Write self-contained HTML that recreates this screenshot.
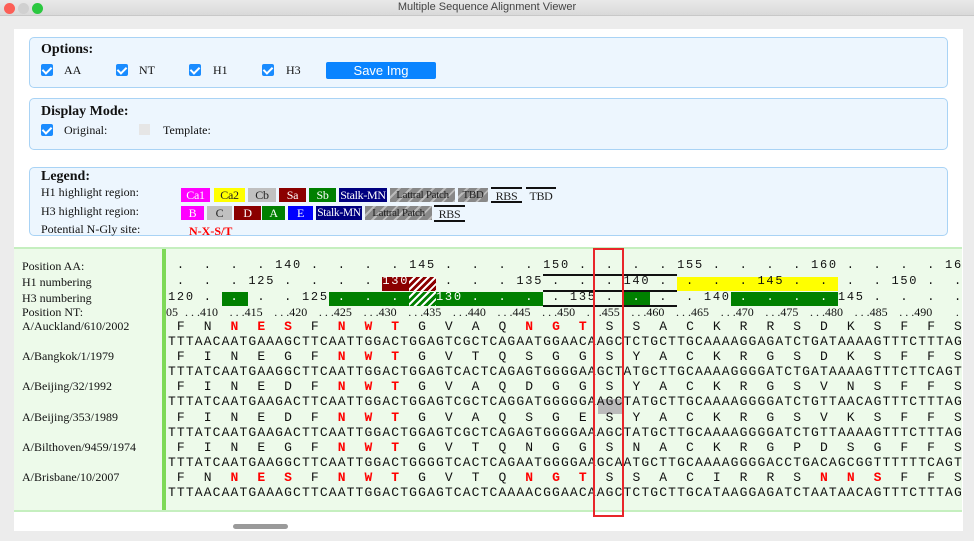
<!DOCTYPE html>
<html><head><meta charset="utf-8"><style>
*{margin:0;padding:0;box-sizing:border-box}
body{width:974px;height:541px;background:#ececec;position:relative;overflow:hidden;font-family:"Liberation Serif",serif;color:#111}
.a{position:absolute;white-space:pre}
.tb{position:absolute;left:0;top:0;width:974px;height:16px;background:linear-gradient(#e9e9e9,#d9d9d9);border-bottom:1px solid #c8c8c8}
.dot{position:absolute;top:3px;width:11px;height:11px;border-radius:50%}
.main{position:absolute;left:14px;top:29px;width:949px;height:502px;background:#fff}
.pn{position:absolute;left:29px;width:919px;background:#edf6fe;border:1px solid #a9d3f5;border-radius:5px}
.h{font-weight:bold;font-size:14px}
.lb{font-size:12px}
.cb{position:absolute;width:12px;height:12px;background:#1a8cff;border-radius:2px}
.cb:after{content:"";position:absolute;left:3px;top:1px;width:4px;height:7px;border:solid #fff;border-width:0 2px 2px 0;transform:rotate(45deg)}
.chip{position:absolute;height:14px;font-size:12px;line-height:14px;text-align:center;color:#fff;white-space:nowrap;overflow:hidden;letter-spacing:-0.3px}
.hat{background:repeating-linear-gradient(135deg,#888 0 6px,#bbb 6px 8px);color:#222;font-size:11px}
.seq{position:absolute;left:166px;top:248px;width:796px;height:263px;overflow:hidden}
.m{position:absolute;left:2px;font-family:"Liberation Mono",monospace;font-size:13px;letter-spacing:1.13px;line-height:15px;white-space:pre;color:#111}
.r{color:#f00;font-weight:bold}
.w{color:#fff}
.bx{position:absolute}
</style></head><body>
<div class="tb">
<div class="dot" style="left:4px;background:#fc5f57"></div>
<div class="dot" style="left:18px;background:#d0d0d0"></div>
<div class="dot" style="left:32px;background:#2bc840"></div>
<div class="a" style="left:0;width:974px;text-align:center;top:1px;font-family:'Liberation Sans',sans-serif;font-size:11px;color:#444">Multiple Sequence Alignment Viewer</div>
</div>
<div class="main"></div>

<div class="pn" style="top:37px;height:51px"></div>
<div class="a h" style="left:41px;top:42px">Options:</div>
<div class="cb" style="left:41px;top:64px"></div><div class="a lb" style="left:64px;top:63px">AA</div>
<div class="cb" style="left:116px;top:64px"></div><div class="a lb" style="left:139px;top:63px">NT</div>
<div class="cb" style="left:189px;top:64px"></div><div class="a lb" style="left:213px;top:63px">H1</div>
<div class="cb" style="left:262px;top:64px"></div><div class="a lb" style="left:286px;top:63px">H3</div>
<div class="a" style="left:326px;top:62px;width:110px;height:17px;background:#0a84ff;border-radius:2px;color:#fff;font-family:'Liberation Sans',sans-serif;font-size:13px;text-align:center;line-height:17px">Save Img</div>

<div class="pn" style="top:98px;height:52px"></div>
<div class="a h" style="left:41px;top:104px">Display Mode:</div>
<div class="cb" style="left:41px;top:124px"></div><div class="a lb" style="left:64px;top:123px">Original:</div>
<div class="a" style="left:139px;top:124px;width:11px;height:11px;background:#e6e6e6"></div><div class="a lb" style="left:163px;top:123px">Template:</div>

<div class="pn" style="top:167px;height:69px"></div>
<div class="a h" style="left:41px;top:169px">Legend:</div>
<div class="a lb" style="left:41px;top:185px">H1 highlight region:</div>
<div class="a lb" style="left:41px;top:204px">H3 highlight region:</div>
<div class="a lb" style="left:41px;top:222px">Potential N-Gly site:</div>
<div class="a r" style="left:189px;top:224px;font-size:12px">N-X-S/T</div>
<div class="chip" style="left:181px;top:188px;width:29px;background:#f0f">Ca1</div>
<div class="chip" style="left:214px;top:188px;width:31px;background:#ff0;color:#222">Ca2</div>
<div class="chip" style="left:248px;top:188px;width:28px;background:#c0c0c0;color:#222">Cb</div>
<div class="chip" style="left:279px;top:188px;width:27px;background:#8b0000">Sa</div>
<div class="chip" style="left:309px;top:188px;width:27px;background:#008000">Sb</div>
<div class="chip" style="left:339px;top:188px;width:48px;background:#000080">Stalk-MN</div>
<div class="chip hat" style="left:390px;top:188px;width:65px">Lattral Patch</div>
<div class="chip hat" style="left:458px;top:188px;width:30px">TBD</div>
<div class="chip" style="left:491px;top:187px;width:31px;color:#222;border-top:2px solid #111;border-bottom:2px solid #111;height:16px">RBS</div>
<div class="chip" style="left:526px;top:187px;width:30px;color:#222;border-top:2px solid #111">TBD</div>
<div class="chip" style="left:181px;top:206px;width:23px;background:#f0f">B</div>
<div class="chip" style="left:207px;top:206px;width:25px;background:#c0c0c0;color:#222">C</div>
<div class="chip" style="left:234px;top:206px;width:27px;background:#8b0000">D</div>
<div class="chip" style="left:262px;top:206px;width:23px;background:#008000">A</div>
<div class="chip" style="left:288px;top:206px;width:25px;background:#0000ff">E</div>
<div class="chip" style="left:316px;top:206px;width:46px;background:#000080;font-size:11.5px">Stalk-MN</div>
<div class="chip hat" style="left:365px;top:206px;width:67px">Lattral Patch</div>
<div class="chip" style="left:434px;top:205px;width:31px;color:#222;border-top:2px solid #111;border-bottom:2px solid #111;height:17px">RBS</div>

<div class="a" style="left:14px;top:247px;width:948px;height:265px;background:#edfaea;border-top:2px solid #c5efbf;border-bottom:2px solid #c5efbf"></div>
<div class="a" style="left:162px;top:249px;width:4px;height:261px;background:#7ed957"></div>
<div class="a lb" style="left:22px;top:259px">Position AA:</div>
<div class="a lb" style="left:22px;top:275px">H1 numbering</div>
<div class="a lb" style="left:22px;top:291px">H3 numbering</div>
<div class="a lb" style="left:22px;top:305px">Position NT:</div>
<div class="a lb" style="left:22px;top:319px">A/Auckland/610/2002</div>
<div class="a lb" style="left:22px;top:349px">A/Bangkok/1/1979</div>
<div class="a lb" style="left:22px;top:379px">A/Beijing/32/1992</div>
<div class="a lb" style="left:22px;top:410px">A/Beijing/353/1989</div>
<div class="a lb" style="left:22px;top:440px">A/Bilthoven/9459/1974</div>
<div class="a lb" style="left:22px;top:470px">A/Brisbane/10/2007</div>

<div class="seq">
<div class="bx" style="left:216.4px;top:29px;width:26.8px;height:14px;background:#8b0000"></div>
<div class="bx" style="left:243.2px;top:29px;width:26.8px;height:14px;background:repeating-linear-gradient(135deg,#8b0000 0 3px,#fff 3px 5px)"></div>
<div class="bx" style="left:511px;top:29px;width:161px;height:14px;background:#ff0"></div>
<div class="bx" style="left:55.6px;top:44px;width:26.8px;height:14px;background:#008000"></div>
<div class="bx" style="left:162.8px;top:44px;width:214.4px;height:14px;background:#008000"></div>
<div class="bx" style="left:243.2px;top:44px;width:26.8px;height:14px;background:repeating-linear-gradient(135deg,#008000 0 3px,#fff 3px 5px)"></div>
<div class="bx" style="left:457.6px;top:44px;width:26.8px;height:14px;background:#008000"></div>
<div class="bx" style="left:564.8px;top:44px;width:107.2px;height:14px;background:#008000"></div>
<div class="bx" style="left:377.2px;top:26px;width:134px;height:2px;background:#111"></div>
<div class="bx" style="left:377.2px;top:42px;width:134px;height:2px;background:#111"></div>
<div class="bx" style="left:377.2px;top:57px;width:134px;height:2px;background:#111"></div>
<div class="bx" style="left:431.6px;top:151px;width:26.8px;height:15px;background:#bbb"></div>
<div class="m" style="top:10px;font-size:12px;letter-spacing:1.73px"> .  .  .  . 140 .  .  .  . 145 .  .  .  . 150 .  .  .  . 155 .  .  .  . 160 .  .  .  . 16 </div>
<div class="m" style="top:26px;font-size:12px;letter-spacing:1.73px"> .  .  . 125 .  .  .  . <span class="w">130</span>    .  .  . 135 .  .  . 140 .  .  .  . 145 .  .  .  . 150 .  . </div>
<div class="m" style="top:42px;font-size:12px;letter-spacing:1.73px">120 . <span class="w"> . </span> .  . 125<span class="w"> .  .  .    130 .  .  . </span> . 135 . <span class="w"> . </span> .  . 140<span class="w"> .  .  .  . </span>145 .  .  .  . </div>
<div class="a" style="left:0;top:57px;font-size:12px;line-height:15px">05</div>
<div class="a" style="left:6px;top:57px;font-size:12px;line-height:15px"><span style="display:inline-block;width:46px;text-align:right">. . .410</span><span style="display:inline-block;width:44.65px;text-align:right">. . .415</span><span style="display:inline-block;width:44.65px;text-align:right">. . .420</span><span style="display:inline-block;width:44.65px;text-align:right">. . .425</span><span style="display:inline-block;width:44.65px;text-align:right">. . .430</span><span style="display:inline-block;width:44.65px;text-align:right">. . .435</span><span style="display:inline-block;width:44.65px;text-align:right">. . .440</span><span style="display:inline-block;width:44.65px;text-align:right">. . .445</span><span style="display:inline-block;width:44.65px;text-align:right">. . .450</span><span style="display:inline-block;width:44.65px;text-align:right">. . .455</span><span style="display:inline-block;width:44.65px;text-align:right">. . .460</span><span style="display:inline-block;width:44.65px;text-align:right">. . .465</span><span style="display:inline-block;width:44.65px;text-align:right">. . .470</span><span style="display:inline-block;width:44.65px;text-align:right">. . .475</span><span style="display:inline-block;width:44.65px;text-align:right">. . .480</span><span style="display:inline-block;width:44.65px;text-align:right">. . .485</span><span style="display:inline-block;width:44.65px;text-align:right">. . .490</span><span style="display:inline-block;width:44.65px;text-align:right">. . .4</span></div>

<div class="m" style="top:71px"> F  N <span class="r"> N  E  S </span> F <span class="r"> N  W  T </span> G  V  A  Q <span class="r"> N  G  T </span> S  S  A  C  K  R  R  S  D  K  S  F  F  S </div>
<div class="m" style="top:86px">TTTAACAATGAAAGCTTCAATTGGACTGGAGTCGCTCAGAATGGAACAAGCTCTGCTTGCAAAAGGAGATCTGATAAAAGTTTCTTTAGT</div>
<div class="m" style="top:101px"> F  I  N  E  G  F <span class="r"> N  W  T </span> G  V  T  Q  S  G  G  S  Y  A  C  K  R  G  S  D  K  S  F  F  S </div>
<div class="m" style="top:116px">TTTATCAATGAAGGCTTCAATTGGACTGGAGTCACTCAGAGTGGGGAAGCTATGCTTGCAAAAGGGGATCTGATAAAAGTTTCTTCAGT</div>
<div class="m" style="top:131px"> F  I  N  E  D  F <span class="r"> N  W  T </span> G  V  A  Q  D  G  G  S  Y  A  C  K  R  G  S  V  N  S  F  F  S </div>
<div class="m" style="top:146px">TTTATCAATGAAGACTTCAATTGGACTGGAGTCGCTCAGGATGGGGGAAGCTATGCTTGCAAAAGGGGATCTGTTAACAGTTTCTTTAGT</div>
<div class="m" style="top:162px"> F  I  N  E  D  F <span class="r"> N  W  T </span> G  V  A  Q  S  G  E  S  Y  A  C  K  R  G  S  V  K  S  F  F  S </div>
<div class="m" style="top:177px">TTTATCAATGAAGACTTCAATTGGACTGGAGTCGCTCAGAGTGGGGAAAGCTATGCTTGCAAAAGGGGATCTGTTAAAAGTTTCTTTAGT</div>
<div class="m" style="top:192px"> F  I  N  E  G  F <span class="r"> N  W  T </span> G  V  T  Q  N  G  G  S  N  A  C  K  R  G  P  D  S  G  F  F  S </div>
<div class="m" style="top:207px">TTTATCAATGAAGGCTTCAATTGGACTGGGGTCACTCAGAATGGGGAAGCAATGCTTGCAAAAGGGGACCTGACAGCGGTTTTTTCAGT</div>
<div class="m" style="top:222px"> F  N <span class="r"> N  E  S </span> F <span class="r"> N  W  T </span> G  V  T  Q <span class="r"> N  G  T </span> S  S  A  C  I  R  R  S <span class="r"> N  N  S </span> F  F  S </div>
<div class="m" style="top:237px">TTTAACAATGAAAGCTTCAATTGGACTGGAGTCACTCAAAACGGAACAAGCTCTGCTTGCATAAGGAGATCTAATAACAGTTTCTTTAGT</div>
</div>
<div class="a" style="left:593px;top:248px;width:31px;height:269px;border:2px solid #e8262a"></div>
<div class="a" style="left:233px;top:524px;width:55px;height:5px;background:#9a9a9a;border-radius:3px"></div>
</body></html>
